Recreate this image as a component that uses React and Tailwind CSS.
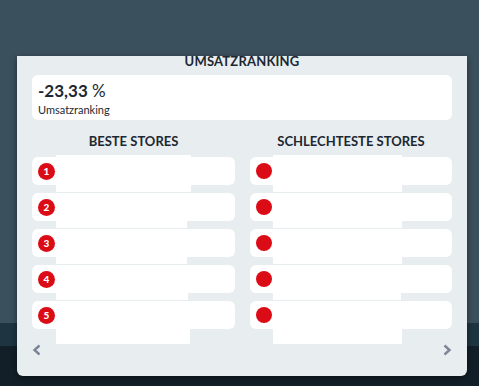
const best = [
    { rank: 1, w: "w-[135px]", first: true },
    { rank: 2, w: "w-[131px]" },
    { rank: 3, w: "w-[131px]" },
    { rank: 4, w: "w-[132px]" },
    { rank: 5, w: "w-[134px]", last: true },
];

const worst = [
    { w: "w-[129px]", first: true },
    { w: "w-[129px]" },
    { w: "w-[129px]" },
    { w: "w-[128px]" },
    { w: "w-[129px]", last: true },
];

const Redact = ({ w, first, last, left }) => (
    <div
        className={`absolute bg-white ${left} ${w} ${
            first ? "-top-[2px] h-[37px]" : "top-0 h-[35px]"
        } ${last ? "h-[43px]" : ""}`}
    />
);

const StoreRow = ({ rank, w, first, last, left }) => (
    <div className="relative h-[28px] bg-white rounded-md flex items-center pl-[6px]">
        {rank ? (
            <span className="w-[17px] h-[17px] rounded-full bg-[#dc0c17] text-white text-[10px] font-black flex items-center justify-center leading-none">
                {rank}
            </span>
        ) : (
            <span className="w-[16px] h-[16px] rounded-full bg-[#dc0c17]" />
        )}
        {/* redacted store name */}
        <Redact w={w} first={first} last={last} left={left} />
    </div>
);

const Chevron = ({ dir }) => (
    <svg viewBox="0 0 10 12" className="w-[10px] h-[12px]">
        <polyline
            points={dir === "left" ? "7.5,1.5 2.5,6 7.5,10.5" : "2.5,1.5 7.5,6 2.5,10.5"}
            fill="none"
            stroke="#7b8594"
            strokeWidth="2.4"
        />
    </svg>
);

export default function App() {
    return (
        <div
            className="relative w-[479px] h-[386px] overflow-hidden bg-[#3a505c]"
            style={{ fontFamily: "Lato, 'Open Sans', sans-serif" }}
        >
            {/* background bands */}
            <div className="absolute left-0 right-0 top-[323px] h-[23px] bg-[#1e3441]" />
            <div className="absolute left-0 right-0 top-[346px] bottom-0 bg-[#121f28]" />

            <div className="relative pt-[56px] pl-[17px]">
                <div className="w-[450px] h-[320px] bg-[#e8edf0] rounded-b-md shadow-[0_2px_6px_rgba(0,0,0,0.45)] overflow-hidden px-[15px] text-[#1c2831]">
                    <div className="-mt-[1px] text-center text-[13px] leading-[13px] font-bold tracking-[0.2px]">
                        UMSATZRANKING
                    </div>

                    {/* summary */}
                    <div className="mt-[7px] h-[45px] bg-white rounded-md pl-[6px] pt-[6px]">
                        <div className="text-[17px] leading-[20px]">
                            <span className="font-bold">-23,33</span> %
                        </div>
                        <div className="text-[11px] leading-[14px] mt-[2px]">Umsatzranking</div>
                    </div>

                    <div className="flex gap-[15px] mt-[15px]">
                        <div className="w-[203px]">
                            <div className="text-center text-[13px] leading-[13px] font-bold h-[22px]">
                                BESTE STORES
                            </div>
                            <div className="flex flex-col gap-[8px]">
                                {best.map((r) => (
                                    <StoreRow key={r.rank} {...r} left="left-[24px]" />
                                ))}
                            </div>
                        </div>
                        <div className="w-[202px]">
                            <div className="text-center text-[13px] leading-[13px] font-bold h-[22px]">
                                SCHLECHTESTE STORES
                            </div>
                            <div className="flex flex-col gap-[8px]">
                                {worst.map((r, i) => (
                                    <StoreRow key={i} {...r} left="left-[23px]" />
                                ))}
                            </div>
                        </div>
                    </div>

                    <div className="flex justify-between mt-[15px]">
                        <Chevron dir="left" />
                        <Chevron dir="right" />
                    </div>
                </div>
            </div>
        </div>
    );
}
